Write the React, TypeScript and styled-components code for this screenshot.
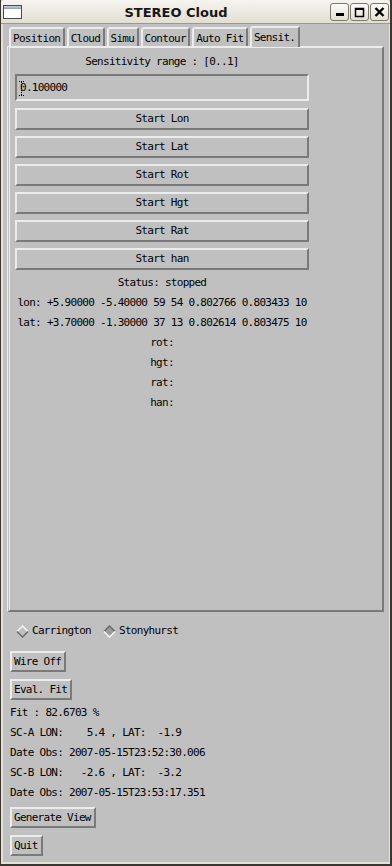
import React from "react";
import styled, { createGlobalStyle } from "styled-components";

const MONO = `"DejaVu Sans Mono", "Liberation Mono", monospace`;
const GRAY = "#c0c0c0";
const LIGHT = "#ececec";
const DARK = "#7a7a7a";
const FRAME_DARK = "#3b3630";
const FRAME_LIGHT = "#e4e1d8";

const GlobalStyle = createGlobalStyle`
  html, body { margin: 0; padding: 0; background: ${GRAY}; }
  body { font-family: ${MONO}; }
  * { box-sizing: border-box; }
`;

const Window = styled.div`
  width: 392px;
  height: 866px;
  display: flex;
  flex-direction: column;
  border-left: 1px solid ${FRAME_DARK};
  border-right: 2px solid ${FRAME_DARK};
  border-bottom: 2px solid ${FRAME_DARK};
  background: ${GRAY};
  overflow: hidden;
`;

const TitleBar = styled.div`
  height: 24px;
  flex: none;
  display: flex;
  align-items: center;
  background: linear-gradient(#f6f4ef, #e2ded3);
  border-bottom: 1px solid #9d988c;
  border-top-left-radius: 3px;
  border-top-right-radius: 3px;
`;

const WinIcon = styled.svg`
  margin-left: 1px;
  flex: none;
`;

const Title = styled.div`
  flex: 1;
  text-align: center;
  font-family: "DejaVu Sans", "Liberation Sans", sans-serif;
  font-weight: bold;
  font-size: 13px;
  color: #161616;
  padding-top: 1px;
`;

const TitleButtons = styled.div`
  display: flex;
  gap: 1px;
  margin-right: 1px;
`;

const TitleButton = styled.div`
  width: 19px;
  height: 18px;
  border: 1px solid #7d786c;
  border-radius: 3px;
  background: linear-gradient(#fdfcf9, #e3dfd4);
  display: flex;
  align-items: center;
  justify-content: center;
`;

const Client = styled.div`
  flex: 1;
  display: flex;
  flex-direction: column;
  border-left: 2px solid ${FRAME_LIGHT};
  border-right: 1px solid ${FRAME_LIGHT};
  border-bottom: 2px solid ${FRAME_LIGHT};
  padding: 3px 0 0 4px;
  font-family: ${MONO};
  font-size: 11px;
  letter-spacing: -0.72px;
  color: #000;
`;

const TabRow = styled.div`
  display: flex;
  align-items: flex-end;
  gap: 2px;
  margin-left: 2px;
  height: 19px;
  position: relative;
  z-index: 1;
`;

const Tab = styled.div<{ $active?: boolean }>`
  border-left: 2px solid ${LIGHT};
  border-top: 2px solid ${LIGHT};
  border-right: 2px solid ${DARK};
  border-radius: 3px 3px 0 0;
  padding: 2px 2.4px 0 2px;
  line-height: 15px;
  height: ${(p) => (p.$active ? "21px" : "19px")};
  margin-bottom: ${(p) => (p.$active ? "-1px" : "0")};
  background: ${GRAY};
  white-space: pre;
`;

const Panel = styled.div`
  width: 377px;
  height: 566px;
  flex: none;
  border-left: 3px double ${LIGHT};
  border-top: 2px solid ${LIGHT};
  border-right: 2px solid ${DARK};
  border-bottom: 2px solid ${DARK};
  padding-top: 4px;
`;

const Column = styled.div`
  width: 294px;
  margin-left: 5px;
  display: flex;
  flex-direction: column;
`;

const Caption = styled.div`
  line-height: 20px;
  text-align: center;
  white-space: pre;
  margin-bottom: 2px;
`;

const TextField = styled.div`
  position: relative;
  height: 27px;
  border-top: 2px solid ${DARK};
  border-left: 2px solid ${DARK};
  border-bottom: 2px solid ${LIGHT};
  border-right: 2px solid ${LIGHT};
  padding: 0 3px;
  line-height: 23px;
  margin-bottom: 7px;
`;

const Caret = styled.svg`
  position: absolute;
  left: 2px;
  top: 5px;
`;

const ButtonStack = styled.div`
  display: flex;
  flex-direction: column;
  gap: 6px;
`;

const WideButton = styled.div`
  height: 22px;
  border-top: 2px solid ${LIGHT};
  border-left: 2px solid ${LIGHT};
  border-bottom: 2px solid ${DARK};
  border-right: 2px solid ${DARK};
  line-height: 18px;
  text-align: center;
  white-space: pre;
`;

const Lines = styled.div<{ $gapTop: number }>`
  margin-top: ${(p) => p.$gapTop}px;
  display: flex;
  flex-direction: column;
`;

const CenterLine = styled.div`
  line-height: 20px;
  height: 20px;
  text-align: center;
  white-space: pre;
  display: flex;
  justify-content: center;
`;

const RadioRow = styled.div`
  margin-top: 9px;
  height: 20px;
  display: flex;
  align-items: center;
  padding-left: 9px;
  gap: 12px;
`;

const RadioItem = styled.div`
  display: flex;
  align-items: center;
  gap: 3px;
  line-height: 20px;
  white-space: pre;
`;

const Lower = styled.div`
  padding-left: 3px;
  display: flex;
  flex-direction: column;
  align-items: flex-start;
`;

const SmallButton = styled.div<{ $top: number }>`
  margin-top: ${(p) => p.$top}px;
  height: 21px;
  border-top: 2px solid ${LIGHT};
  border-left: 2px solid ${LIGHT};
  border-bottom: 2px solid ${DARK};
  border-right: 2px solid ${DARK};
  padding: 0 3px 0 2px;
  line-height: 17px;
  white-space: pre;
`;

const InfoLine = styled.div`
  line-height: 20px;
  height: 20px;
  white-space: pre;
`;

const Diamond: React.FC<{ selected?: boolean }> = ({ selected }) => {
  const top = selected ? "#6e6e6e" : "#f4f4f4";
  const bottom = selected ? "#f4f4f4" : "#6e6e6e";
  return (
    <svg width="13" height="13" viewBox="0 0 13 13">
      <polygon points="6.5,1 12,6.5 6.5,12 1,6.5" fill={selected ? "#9a9a9a" : GRAY} />
      <polyline points="1,6.5 6.5,1 12,6.5" fill="none" stroke={top} strokeWidth="1.6" />
      <polyline points="1,6.5 6.5,12 12,6.5" fill="none" stroke={bottom} strokeWidth="1.6" />
    </svg>
  );
};

const tabs = ["Position", "Cloud", "Simu", "Contour", "Auto Fit", "Sensit."];
const starts = ["Start Lon", "Start Lat", "Start Rot", "Start Hgt", "Start Rat", "Start han"];
const results = [
  "lon: +5.90000 -5.40000 59 54 0.802766 0.803433 10",
  "lat: +3.70000 -1.30000 37 13 0.802614 0.803475 10",
  "rot:",
  "hgt:",
  "rat:",
  "han:",
];
const info = [
  "Fit : 82.6703 %",
  "SC-A LON:    5.4 , LAT:  -1.9",
  "Date Obs: 2007-05-15T23:52:30.006",
  "SC-B LON:   -2.6 , LAT:  -3.2",
  "Date Obs: 2007-05-15T23:53:17.351",
];

export default function App() {
  return (
    <>
      <GlobalStyle />
      <Window>
        <TitleBar>
          <WinIcon width="20" height="14" viewBox="0 0 20 14">
            <defs>
              <linearGradient id="wbar" x1="0" y1="0" x2="0" y2="1">
                <stop offset="0" stopColor="#c9d3de" />
                <stop offset="1" stopColor="#8c9cb0" />
              </linearGradient>
            </defs>
            <rect x="1.5" y="0.5" width="18" height="13" fill="#ffffff" stroke="#4a4a4a" />
            <rect x="2" y="1" width="17" height="3" fill="url(#wbar)" />
          </WinIcon>
          <Title>STEREO Cloud</Title>
          <TitleButtons>
            <TitleButton>
              <svg width="17" height="16" viewBox="0 0 17 16">
                <rect x="5" y="9" width="8" height="3" fill="#000" />
              </svg>
            </TitleButton>
            <TitleButton>
              <svg width="17" height="16" viewBox="0 0 17 16">
                <rect x="4.5" y="4.5" width="8" height="8" fill="none" stroke="#000" strokeWidth="1.5" />
                <rect x="4" y="4" width="9" height="2" fill="#000" />
              </svg>
            </TitleButton>
            <TitleButton>
              <svg width="17" height="16" viewBox="0 0 17 16">
                <path d="M4.5 4 L12.5 12 M12.5 4 L4.5 12" stroke="#000" strokeWidth="2.4" />
              </svg>
            </TitleButton>
          </TitleButtons>
        </TitleBar>
        <Client>
          <TabRow>
            {tabs.map((t) => (
              <Tab key={t} $active={t === "Sensit."}>
                {t}
              </Tab>
            ))}
          </TabRow>
          <Panel>
            <Column>
              <Caption>Sensitivity range : [0..1]</Caption>
              <TextField>
                0.100000
                <Caret width="5" height="15" viewBox="0 0 5 15">
                  <path d="M0 0.5 H5 M0 14.5 H5 M2.5 1 V14" stroke="#000" strokeWidth="1" strokeDasharray="1 1" />
                </Caret>
              </TextField>
              <ButtonStack>
                {starts.map((s) => (
                  <WideButton key={s}>{s}</WideButton>
                ))}
              </ButtonStack>
              <Lines $gapTop={3}>
                <CenterLine>Status: stopped</CenterLine>
                {results.map((r) => (
                  <CenterLine key={r}>{r}</CenterLine>
                ))}
              </Lines>
            </Column>
          </Panel>
          <RadioRow>
            <RadioItem>
              <Diamond />
              Carrington
            </RadioItem>
            <RadioItem>
              <Diamond selected />
              Stonyhurst
            </RadioItem>
          </RadioRow>
          <Lower>
            <SmallButton $top={10}>Wire Off</SmallButton>
            <SmallButton $top={7}>Eval. Fit</SmallButton>
            <Lines $gapTop={3}>
              {info.map((l) => (
                <InfoLine key={l}>{l}</InfoLine>
              ))}
            </Lines>
            <SmallButton $top={4}>Generate View</SmallButton>
            <SmallButton $top={7}>Quit</SmallButton>
          </Lower>
        </Client>
      </Window>
    </>
  );
}
